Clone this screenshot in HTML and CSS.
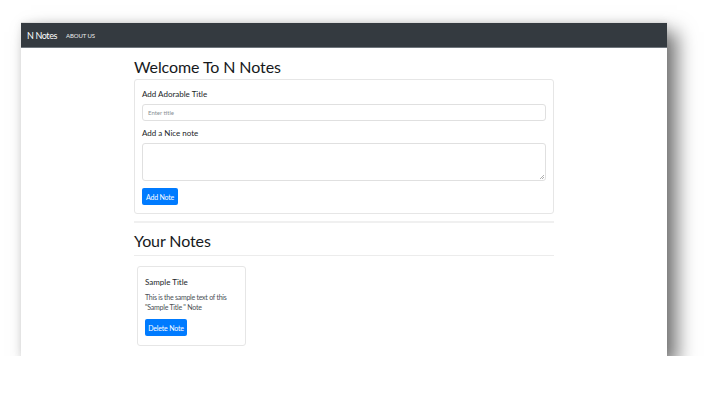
FILE: index.html
```html
<!DOCTYPE html>
<html>
<head>
<meta charset="utf-8">
<link rel="stylesheet" href="styles.css">
</head>
<body>
<div class="frame">
  <nav class="navbar">
    <span class="brand">N Notes</span>
    <span class="nav-link">ABOUT US</span>
  </nav>
  <main class="container">
    <h1 class="title">Welcome To N Notes</h1>
    <div class="card form-card">
      <label class="label">Add Adorable Title</label>
      <div class="input">Enter title</div>
      <label class="label label2">Add a Nice note</label>
      <div class="textarea"><span class="grip"></span></div>
      <button class="btn">Add Note</button>
    </div>
    <hr class="rule">
    <h2 class="title2">Your Notes</h2>
    <hr class="rule rule2">
    <div class="card note-card">
      <div class="note-title">Sample Title</div>
      <p class="note-text">This is the sample text of this "Sample Title " Note</p>
      <button class="btn btn-del">Delete Note</button>
    </div>
  </main>
</div>
</body>
</html>
```

FILE: styles.css
```css
* { box-sizing: border-box; }
html, body { margin: 0; padding: 0; background: #fff; }
body {
  padding: 22px 0 0 21px;
  font-family: "Lato", "Noto Sans", sans-serif;
  color: #212529;
}
.frame {
  width: 646px;
  height: 334px;
  background: #fff;
  border-top: 1px solid #dcdcdc;
  box-shadow: 10px 10px 18px rgba(0,0,0,0.55), 0 0 8px rgba(0,0,0,0.08);
  overflow: hidden;
}
.navbar {
  height: 25px;
  background: #343a40;
  border-bottom: 1px solid #6f767d;
  display: flex;
  align-items: center;
  padding-left: 6px;
  gap: 9px;
}
.brand { color: #fff; font-size: 9px; letter-spacing: -0.4px; }
.nav-link { color: #e9ecef; font-size: 6px; letter-spacing: -0.1px; }
.container { width: 420px; margin: 0 auto; }
.title {
  margin: 0;
  padding-top: 8px;
  height: 31px;
  font-size: 16px;
  font-weight: 400;
  line-height: 22px;
  letter-spacing: -0.1px;
  color: #16191c;
}
.card {
  border: 1px solid #e6e6e6;
  border-radius: 3px;
  background: #fff;
}
.form-card {
  height: 135px;
  padding: 7px 7px 0 7px;
  display: flex;
  flex-direction: column;
}
.label {
  font-size: 8px;
  line-height: 14px;
  height: 17px;
  color: #212529;
}
.label2 { margin-top: 5px; height: 17px; }
.input {
  height: 17px;
  border: 1px solid #e0e0e0;
  border-radius: 3px;
  font-size: 6px;
  color: #8a8f94;
  padding: 4px 5px;
  line-height: 8px;
}
.textarea {
  position: relative;
  height: 38px;
  border: 1px solid #e0e0e0;
  border-radius: 3px;
}
.grip {
  position: absolute;
  right: 1px; bottom: 1px;
  width: 4px; height: 4px;
  background: linear-gradient(135deg, transparent 50%, #b0b0b0 50%, #b0b0b0 60%, transparent 60%, transparent 75%, #b0b0b0 75%, #b0b0b0 85%, transparent 85%);
}
.btn {
  margin-top: 7px;
  width: 36px;
  height: 17px;
  padding: 0;
  border: none;
  border-radius: 2px;
  background: #007bff;
  color: #fff;
  font-family: inherit;
  font-size: 7px;
  letter-spacing: -0.2px;
}
.rule {
  margin: 7px 0 0 0;
  border: 0;
  border-top: 2px solid #f0f0f0;
}
.title2 {
  margin: 0;
  padding-top: 7px;
  height: 32px;
  font-size: 16px;
  font-weight: 400;
  line-height: 22px;
  letter-spacing: -0.1px;
  color: #16191c;
}
.rule2 { margin-top: 0; border-top: 1px solid #ececec; }
.note-card {
  margin: 10px 0 0 3px;
  width: 109px;
  height: 80px;
  padding: 9px 7px 0 7px;
}
.note-title { font-size: 8px; line-height: 12px; color: #212529; }
.note-text {
  margin: 4px 0 0 0;
  font-size: 7px;
  line-height: 10px;
  color: #4a4f55;
  letter-spacing: -0.25px;
}
.btn-del {
  margin-top: 7px;
  width: 42px;
}
```
